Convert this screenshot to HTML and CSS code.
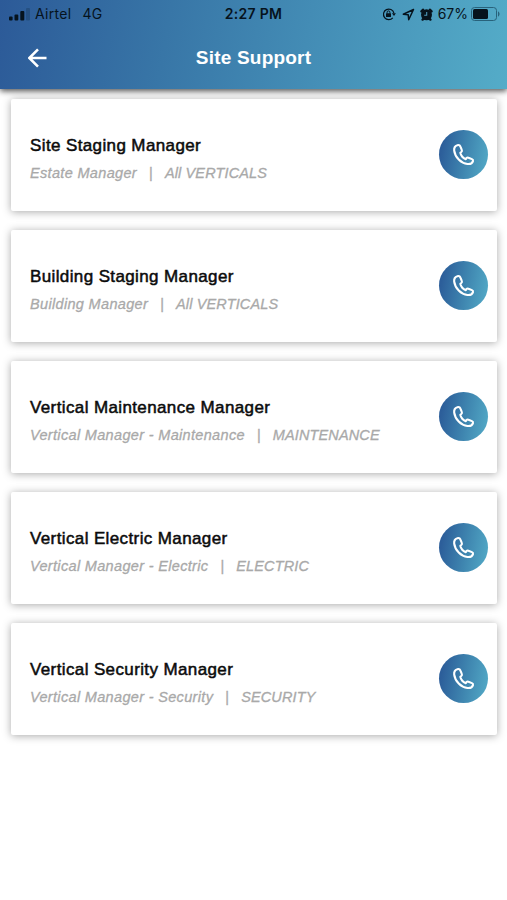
FILE: index.html
```html
<!DOCTYPE html>
<html lang="en">
<head>
<meta charset="utf-8">
<title>Site Support</title>
<link rel="stylesheet" href="styles.css">
</head>
<body>
<svg class="defs" width="0" height="0" aria-hidden="true">
  <symbol id="phone" viewBox="0 0 24 24">
    <path d="M5.500 2.300C3.200 3 2 5.200 2.300 7.900c.9 7 7.100 13.300 13.800 14 2.800.3 5.200-1 5.800-3 .3-1-.2-1.700-1.100-2.100l-3.600-1.500c-.9-.4-1.600-.1-2.100.6l-.7 1c-2.800-1.100-5-3.700-5.700-6.700l1-.8c.7-.6.9-1.300.5-2.200L8.700 3.600c-.5-1.300-1.700-1.800-3.200-1.300z"/>
  </symbol>
</svg>
<header class="header">
  <div class="status">
    <div class="status-left">
      <svg class="signal" width="21" height="13" viewBox="0 0 21 13">
        <rect x="0" y="8.500" width="3.600" height="4" rx="1"/>
        <rect x="5.500" y="6.500" width="3.800" height="6" rx="1"/>
        <rect x="11.300" y="3" width="4" height="9.500" rx="1"/>
        <rect x="17" y="0" width="4" height="12.500" rx="1" opacity=".2"/>
      </svg>
      <span class="carrier">Airtel</span>
      <span class="network">4G</span>
    </div>
    <span class="time">2:27 PM</span>
    <div class="status-right">
      <svg class="lock" width="14" height="14" viewBox="0 0 14 14">
        <path d="M10.800 10.800A5.300 5.300 0 1 1 11.900 6" fill="none" stroke="#06131d" stroke-width="1.200"/>
        <path d="M9.900 6.200h4L12 9z"/>
        <rect x="4" y="6.200" width="5" height="3.800" rx=".5"/>
        <path d="M5.100 6.500V5.300a1.400 1.400 0 0 1 2.800 0v1.200" fill="none" stroke="#06131d"/>
      </svg>
      <svg class="locate" width="13" height="13" viewBox="0 0 13 13">
        <path d="M11.500 1.500 1.300 6.200l4.900.6.500 5z" fill="none" stroke="#06131d" stroke-width="1.500" stroke-linejoin="round"/>
      </svg>
      <svg class="alarm" width="13" height="13" viewBox="0 0 13 13">
        <circle cx="6.500" cy="6.800" r="5.500"/>
        <path d="M1.500 3.400 3 1.700M11.500 3.400 10 1.700M2.600 11.600l1-1M10.400 11.600l-1-1" stroke="#06131d" stroke-width="2.400" stroke-linecap="round"/>
        <path d="M6.700 4v3.300H4.200" fill="none" stroke="#4d98b9" stroke-width="1.100"/>
      </svg>
      <span class="percent">67%</span>
      <svg class="battery" width="29" height="14" viewBox="0 0 29 14">
        <rect x=".5" y=".5" width="25" height="13" rx="3" fill="none" stroke="#28627b"/>
        <rect x="2" y="2" width="15" height="10" rx="1.500"/>
        <path d="M27 4.500c2 .6 2 4.400 0 5z" fill="#28627b"/>
      </svg>
    </div>
  </div>
  <div class="nav">
    <svg class="back" width="20" height="20" viewBox="0 0 20 20">
      <path d="M18.500 10H1.500M10 1.300 1.300 10l8.700 8.700"/>
    </svg>
    <h1 class="heading">Site Support</h1>
  </div>
</header>
<main class="list">
  <article class="card">
    <div class="info"><h2 class="name">Site Staging Manager</h2><p class="role"><span class="post">Estate Manager</span><i class="bar">|</i><span>All VERTICALS</span></p></div>
    <a class="call"><svg class="phone"><use href="#phone"/></svg></a>
  </article>
  <article class="card">
    <div class="info"><h2 class="name">Building Staging Manager</h2><p class="role"><span class="post">Building Manager</span><i class="bar">|</i><span>All VERTICALS</span></p></div>
    <a class="call"><svg class="phone"><use href="#phone"/></svg></a>
  </article>
  <article class="card">
    <div class="info"><h2 class="name">Vertical Maintenance Manager</h2><p class="role"><span class="post">Vertical Manager - Maintenance</span><i class="bar">|</i><span>MAINTENANCE</span></p></div>
    <a class="call"><svg class="phone"><use href="#phone"/></svg></a>
  </article>
  <article class="card">
    <div class="info"><h2 class="name">Vertical Electric Manager</h2><p class="role"><span class="post">Vertical Manager - Electric</span><i class="bar">|</i><span>ELECTRIC</span></p></div>
    <a class="call"><svg class="phone"><use href="#phone"/></svg></a>
  </article>
  <article class="card">
    <div class="info"><h2 class="name">Vertical Security Manager</h2><p class="role"><span class="post">Vertical Manager - Security</span><i class="bar">|</i><span>SECURITY</span></p></div>
    <a class="call"><svg class="phone"><use href="#phone"/></svg></a>
  </article>
</main>
</body>
</html>
```
FILE: styles.css
```css
* { box-sizing: border-box; }
body {
  margin: 0;
  height: 900px;
  overflow: hidden;
  background: #fff;
  font-family: "Liberation Sans", Arial, sans-serif;
}
h1, h2, p { margin: 0; }
.defs { display: block; }
.header {
  position: relative;
  height: 89px;
  background: linear-gradient(100deg, #2c5a98 0%, #3876a7 33%, #438cb5 60%, #54acc8 100%);
  box-shadow: 0 2px 6px rgba(0, 0, 0, .7);
}
.status {
  display: grid;
  grid-template-columns: 1fr auto 1fr;
  align-items: center;
  height: 28px;
  padding: 0 7px 0 9px;
  color: #06131d;
  fill: #06131d;
  font-family: Inter, sans-serif;
  font-size: 14px;
  line-height: 28px;
}
.status-left, .status-right { display: flex; align-items: center; }
.status-right { justify-content: flex-end; }
.carrier { margin-left: 5px; letter-spacing: .3px; }
.network { margin-left: 11px; letter-spacing: .2px; }
.time { margin-left: -2px; font-weight: 600; letter-spacing: .3px; }
.locate { margin-left: 6px; }
.alarm { margin-left: 5px; }
.percent { margin: 0 3px 0 5px; }
.nav {
  display: grid;
  grid-template-columns: 56px 1fr 56px;
  align-items: center;
  height: 59px;
}
.back {
  margin-left: 28px;
  fill: none;
  stroke: #fff;
  stroke-width: 2.6;
}
.heading {
  color: #fff;
  font-size: 19px;
  line-height: 24px;
  text-align: center;
  letter-spacing: .2px;
}
.list {
  display: grid;
  gap: 19px;
  padding: 10px 10px 0 11px;
}
.card {
  display: flex;
  align-items: center;
  justify-content: space-between;
  height: 112px;
  padding: 0 9.500px 0 19px;
  border-radius: 2px;
  background: #fff;
  box-shadow: 0 1px 8px rgba(0, 0, 0, .34);
}
.info { padding-top: 9px; }
.name {
  color: #0b0b0b;
  font-size: 17px;
  font-weight: 400;
  line-height: 24px;
  letter-spacing: .38px;
  -webkit-text-stroke: .5px #0b0b0b;
}
.role {
  display: flex;
  margin-top: 3px;
  color: #a9a9a9;
  font-size: 14.500px;
  font-style: italic;
  line-height: 24px;
  letter-spacing: .13px;
  -webkit-text-stroke: .3px #a9a9a9;
}
.post { letter-spacing: .33px; }
.bar { margin: 0 12px; font-style: normal; }
.call {
  display: grid;
  place-items: center;
  width: 49px;
  height: 49px;
  margin-bottom: 1px;
  border-radius: 50%;
  background: linear-gradient(100deg, #2c5e9a 10%, #3f86b0 55%, #54acc8 100%);
}
.phone {
  width: 23px;
  height: 23px;
  fill: none;
  stroke: #fff;
  stroke-width: 2.200;
  stroke-linejoin: round;
}
```
